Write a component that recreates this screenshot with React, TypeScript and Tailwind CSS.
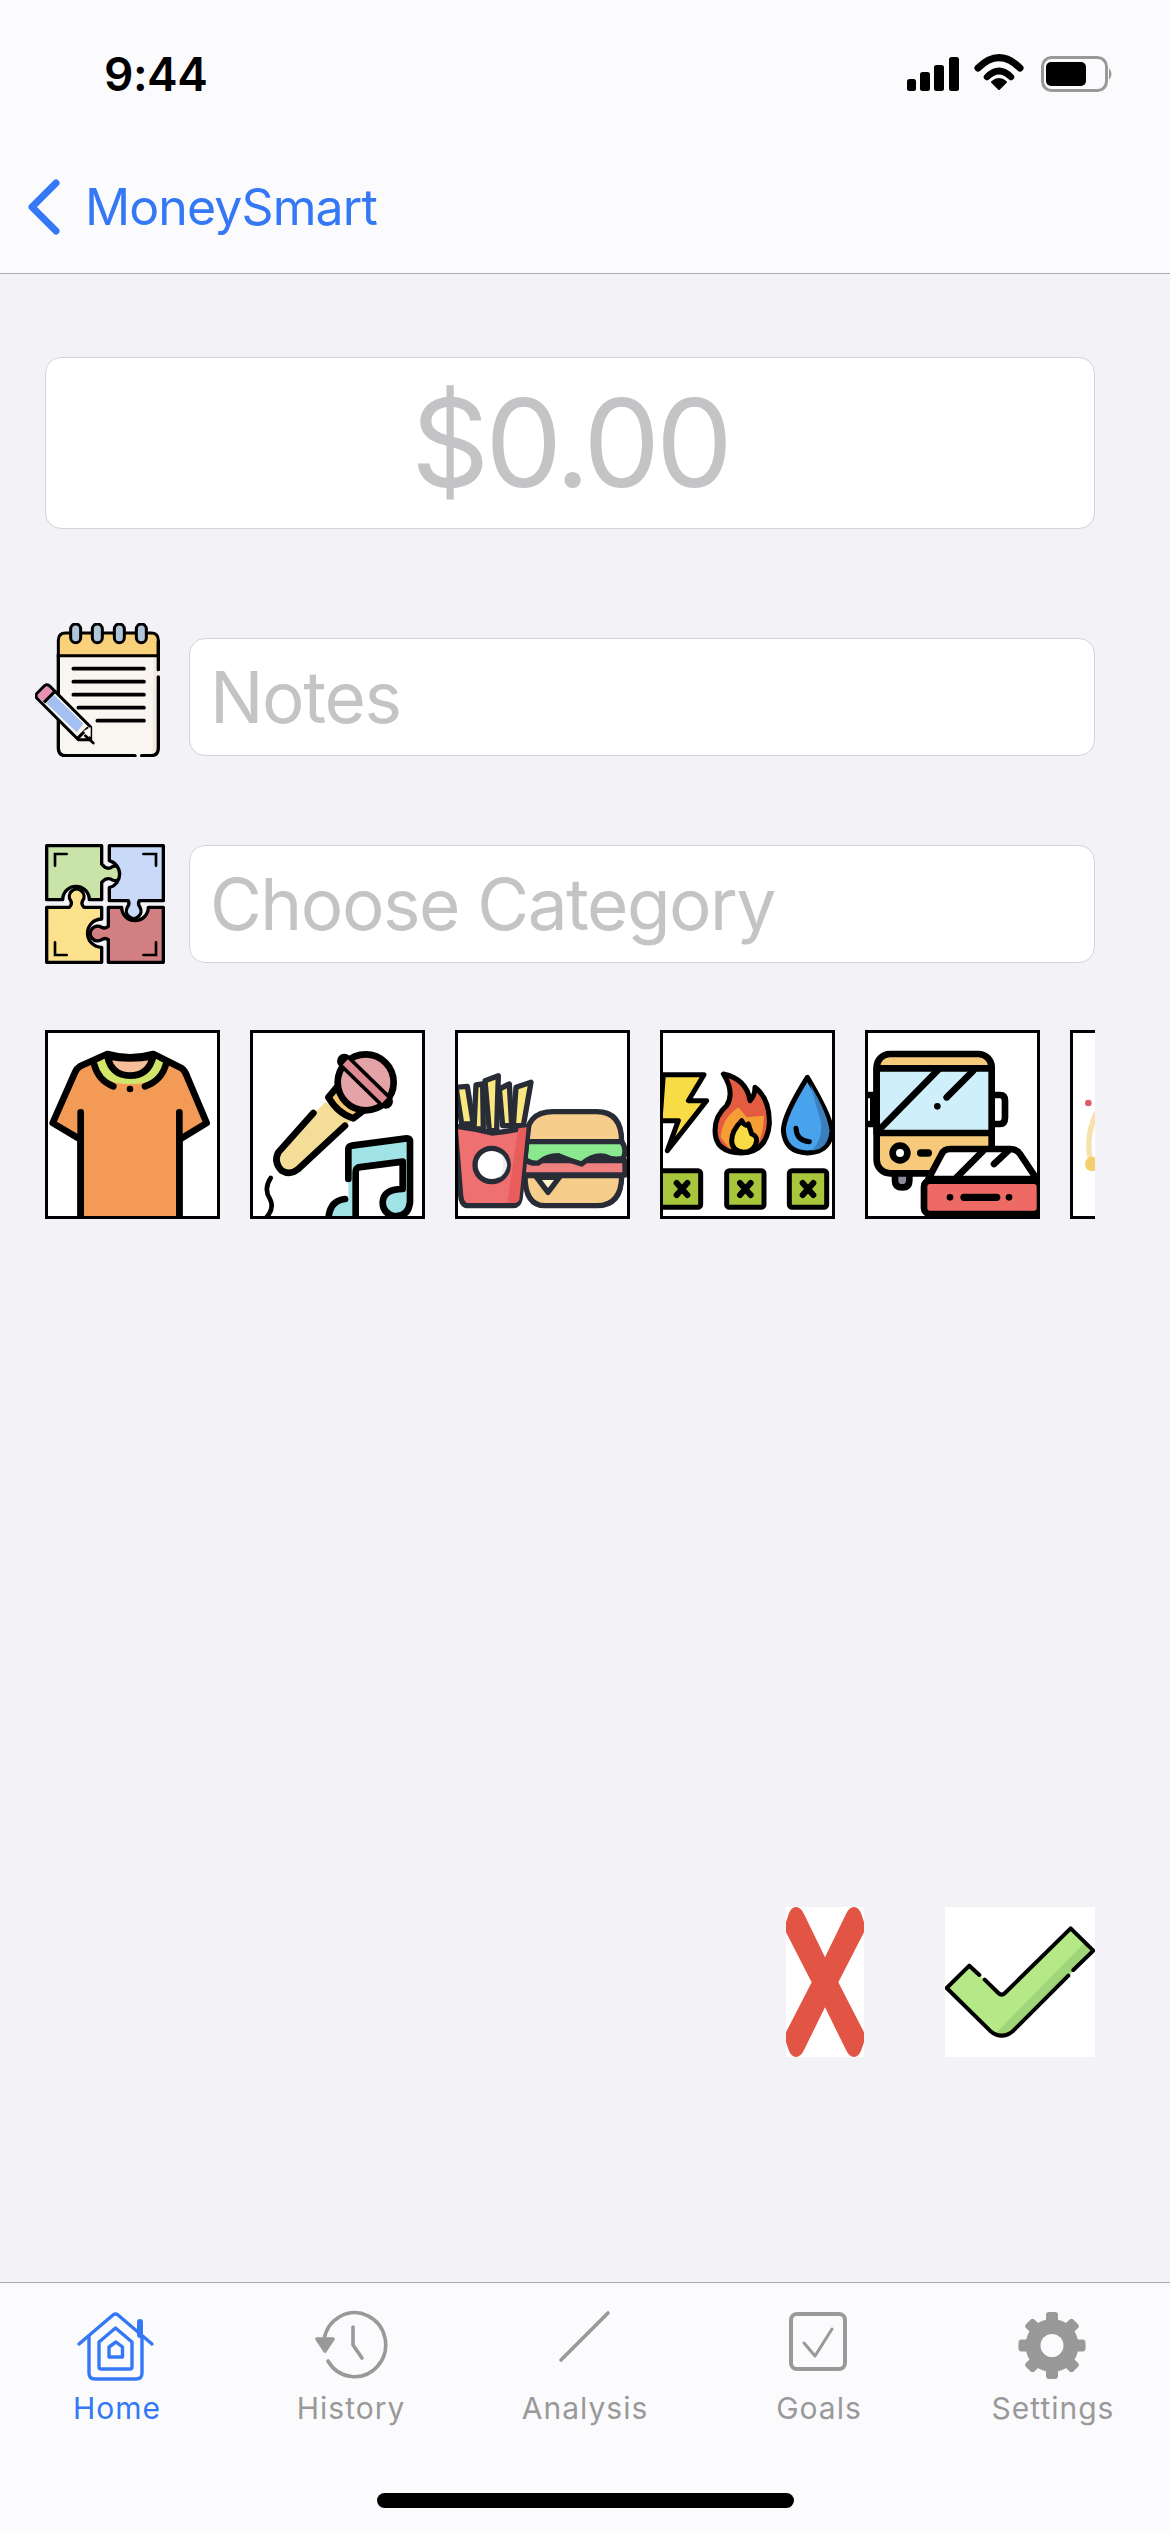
import React from "react";

const BLUE = "#3478f6";
const GRAY = "#999999";

function StatusIcons() {
  return (
    <svg width="216" height="44" viewBox="0 0 216 44" className="shrink-0">
      {/* signal */}
      <rect x="7" y="27" width="9" height="12" rx="2.5" fill="#000" />
      <rect x="20" y="20" width="10" height="19" rx="2.5" fill="#000" />
      <rect x="34" y="13" width="10" height="26" rx="2.5" fill="#000" />
      <rect x="49" y="5" width="10" height="34" rx="2.5" fill="#000" />
      {/* wifi */}
      <path d="M78 16 Q99 -5 120 16" fill="none" stroke="#000" strokeWidth="7" strokeLinecap="round" />
      <path d="M87 25 Q99 13 111 25" fill="none" stroke="#000" strokeWidth="6.5" strokeLinecap="round" />
      <path d="M99 37 L92 30 Q99 24 106 30 Z" fill="#000" stroke="#000" strokeWidth="2" strokeLinejoin="round" />
      {/* battery */}
      <rect x="142.5" y="5.5" width="64" height="33" rx="9" fill="none" stroke={GRAY} strokeWidth="3" />
      <rect x="146" y="10" width="40" height="24" rx="5" fill="#000" />
      <path d="M209 16 Q214 22 209 28 Z" fill={GRAY} />
    </svg>
  );
}

function NotesIcon() {
  return (
    <svg width="125" height="134" viewBox="45 70 375 402" className="shrink-0 -ml-[10px] -mb-px">
      <path d="M115 165 H415 V445 Q415 466 392 466 H138 Q115 466 115 445 Z" fill="#f9f5f1" />
      <path d="M400 165 H415 V445 Q415 466 398 466 Z" fill="#f5e9df" />
      <path d="M115 168 V122 Q115 100 137 100 H393 Q415 100 415 122 V168 Z" fill="#f9d17a" stroke="#000" strokeWidth="9" />
      <path d="M415 210 V125 M415 232 V445 Q415 468 392 468 H365 M345 468 H138 Q115 468 115 445 V165" fill="none" stroke="#000" strokeWidth="10" strokeLinecap="round" />
      {[167, 232, 298, 364].map((x) => (
        <rect key={x} x={x - 15} y="73" width="30" height="56" rx="15" fill="#aec6d8" stroke="#000" strokeWidth="9" />
      ))}
      <path d="M160 207 H372 M160 246 H372 M160 285 H372 M175 324 H372 M232 363 H372" stroke="#000" strokeWidth="11" strokeLinecap="round" />
      <path d="M48 288 L82 256 L212 384 L212 420 L175 420 Z" fill="#f9f5f1" />
      <path d="M78 310 L102 286 L190 372 L170 398 Z" fill="#a4c0f3" />
      <path d="M50 288 L82 258 L102 280 L72 308 Z" fill="#ea8fb4" />
      <path d="M48 288 Q48 284 52 280 L74 258 Q82 252 90 260 L212 382 L212 420 L175 420 L50 295 Z M72 308 L102 278 M175 414 L205 384" fill="none" stroke="#000" strokeWidth="9" strokeLinejoin="round" />
      <path d="M190 395 L212 382 L212 412 Z" fill="#fff" />
      <path d="M196 408 L220 430" stroke="#000" strokeWidth="8" strokeLinecap="round" />
    </svg>
  );
}

function PuzzleIcon() {
  return (
    <svg width="120" height="120" viewBox="75 735 360 360" className="shrink-0">
      <g stroke="#000" strokeWidth="10" strokeLinejoin="round">
        <path d="M80 740 H245 V795 Q258 812 272 806 A22 22 0 1 1 272 840 Q258 835 245 850 V902 H208 A40 40 0 0 0 128 902 H80 Z" fill="#c9e3a9" />
        <path d="M268 740 H430 V905 H358 Q352 915 360 925 A22 22 0 1 1 322 925 Q330 915 325 905 H268 V866 A42 42 0 0 0 268 785 Z" fill="#c9daf8" />
        <path d="M80 925 H148 Q158 915 152 905 A22 22 0 1 1 188 905 Q182 915 192 925 H245 V960 A42 42 0 0 0 245 1045 V1090 H80 Z" fill="#fce28c" />
        <path d="M265 925 H305 A40 40 0 0 0 385 925 H430 V1090 H265 V1022 Q255 1015 245 1022 A22 22 0 1 1 245 985 Q255 990 265 982 Z" fill="#d27f82" />
      </g>
      <g fill="none" stroke="#000" strokeWidth="8" strokeLinecap="round">
        <path d="M140 765 H105 V800" />
        <path d="M370 765 H408 V800" />
        <path d="M105 1030 V1068 H140" />
        <path d="M370 1068 H408 V1030" />
      </g>
    </svg>
  );
}

function ShirtArt() {
  return (
    <svg viewBox="54 72 507 549" className="block w-full h-full">
      <path d="M232 135 Q300 155 370 135 L455 178 Q465 185 470 200 L530 342 L448 392 V640 H152 V392 L68 342 L135 190 Q140 178 150 172 Z" fill="#f29a56" stroke="#000" strokeWidth="20" strokeLinejoin="round" />
      <path d="M195 165 Q215 228 300 225 Q385 228 405 165 L370 145 Q300 160 232 145 Z" fill="#d0e56a" />
      <path d="M232 142 Q300 155 370 142 Q355 200 300 200 Q245 200 232 142 Z" fill="#f6bf9a" stroke="#000" strokeWidth="20" strokeLinejoin="round" />
      <path d="M192 165 Q205 215 250 232 M345 232 Q395 215 408 165 M152 310 V640 M448 310 V640" fill="none" stroke="#000" strokeWidth="20" strokeLinecap="round" />
      <circle cx="300" cy="240" r="10" fill="#000" />
    </svg>
  );
}

function MicArt() {
  return (
    <svg viewBox="669 72 507 549" className="block w-full h-full">
      <path d="M885 280 L745 430 Q730 460 755 485 Q780 500 805 480 L975 325 Z" fill="#f3dd97" />
      <path d="M850 312 L745 430 Q730 460 755 485 Q780 500 805 480 L945 350" fill="none" stroke="#000" strokeWidth="20" strokeLinecap="round" />
      <path d="M895 265 L920 235 L1000 305 L970 328 Q925 315 895 265 Z" fill="#f3ca6e" stroke="#000" strokeWidth="20" strokeLinejoin="round" />
      <circle cx="1007" cy="220" r="84" fill="#e3a3a7" stroke="#000" strokeWidth="20" />
      <path d="M943 156 L1067 277" stroke="#000" strokeWidth="44" strokeLinecap="round" />
      <path d="M946 159 L1064 274" stroke="#df8a92" strokeWidth="22" />
      <path d="M722 507 Q700 540 720 570 Q735 600 705 630" fill="none" stroke="#000" strokeWidth="14" strokeLinecap="round" />
      <path d="M955 510 V415 L1140 388 V590 Q1135 625 1095 622 Q1058 615 1058 580 Q1060 540 1118 540 V458 L980 478 V640 H895 Q895 575 945 570 L955 570 Z" fill="#a0e3e6" />
      <path d="M1118 470 V540 L1000 560 V640 H975 V478 Z" fill="#fff" />
      <path d="M955 510 V420 Q955 412 965 410 L1130 388 Q1140 388 1140 398 V580 Q1135 622 1095 622 Q1058 615 1058 580 Q1060 540 1118 540 V458 L985 475 Q977 478 977 490 V640 M945 570 Q895 575 895 640" fill="none" stroke="#000" strokeWidth="20" strokeLinecap="round" strokeLinejoin="round" />
    </svg>
  );
}

function FoodArt() {
  return (
    <svg viewBox="84 72 507 549" className="block w-full h-full">
      <g stroke="#282c36" strokeWidth="16" strokeLinejoin="round">
        <path d="M290 398 Q285 308 370 308 H500 Q575 308 575 398 Z" fill="#f6cd8b" />
        <path d="M285 500 H575 Q575 590 500 590 H345 Q285 590 285 500 Z" fill="#f6cd8b" />
        <path d="M320 505 H388 L354 550 Z" fill="#fdf4c8" />
        <path d="M280 455 H585 V498 H280 Z" fill="#ef8080" />
        <path d="M290 398 H575 Q592 420 580 448 Q550 455 525 442 Q490 435 455 465 Q420 455 385 440 Q350 440 325 462 Q300 465 285 450 Z" fill="#8ae98f" />
        <path d="M78 235 L112 232 L130 345 H95 Z" fill="#fae77f" />
        <path d="M138 228 L158 225 L160 360 H132 Z" fill="#fae77f" />
        <path d="M165 215 L205 200 L200 365 H178 Z" fill="#fae77f" />
        <path d="M208 240 L238 225 L245 350 H218 Z" fill="#fae77f" />
        <path d="M258 235 L303 220 L280 350 H250 Z" fill="#fae77f" />
        <path d="M75 352 Q130 358 185 372 Q240 368 296 352 L270 570 Q265 590 248 590 L115 590 Q95 590 92 560 Z" fill="#ef7070" />
      </g>
      <path d="M265 358 L290 355 L268 572 Q264 582 250 582 L232 582 Z" fill="#e85c5c" />
      <circle cx="185" cy="468" r="50" fill="#fff" stroke="#282c36" strokeWidth="16" />
      <path d="M205 430 Q235 468 205 508 Q228 495 232 468 Q228 442 205 430 Z" fill="#ececec" />
    </svg>
  );
}

function UtilitiesArt() {
  return (
    <svg viewBox="699 72 507 549" className="block w-full h-full">
      <g stroke="#000" strokeWidth="15" strokeLinejoin="round">
        <path d="M700 197 H822 L775 275 H830 L712 425 L745 335 H690 Z" fill="#f9dc45" />
        <path d="M880 195 Q950 210 960 275 Q975 260 975 235 Q1020 270 1018 345 Q1010 430 935 432 Q855 430 855 365 Q855 320 890 290 Q915 250 880 195 Z" fill="#e35b40" />
        <path d="M1132 205 Q1060 320 1060 365 Q1065 430 1132 432 Q1200 430 1206 365 Q1200 320 1132 205 Z" fill="#49a2ec" />
      </g>
      <path d="M1140 225 Q1195 320 1198 365 Q1195 420 1145 425 Q1180 390 1172 335 Z" fill="#3b7fbd" />
      <path d="M872 385 Q875 330 925 295 L950 325 L1002 320 Q1000 380 980 412 L900 420 Z" fill="#f59e33" />
      <path d="M905 395 Q905 365 935 335 Q945 355 955 345 L965 375 Q980 380 980 395 Q975 430 940 430 Q905 425 905 395 Z" fill="#f9dc45" stroke="#000" strokeWidth="15" strokeLinejoin="round" />
      <path d="M1098 358 Q1100 395 1138 398" fill="none" stroke="#000" strokeWidth="15" strokeLinecap="round" />
      {[690, 890, 1078].map((x) => (
        <g key={x}>
          <rect x={x} y="485" width={x === 690 ? 122 : 112} height="110" rx="8" fill="#a8c63c" stroke="#000" strokeWidth="15" />
          <path d={`M${x + (x === 690 ? 50 : 40)} 522 l32 36 m0 -36 l-32 36`} stroke="#000" strokeWidth="18" strokeLinecap="round" />
        </g>
      ))}
    </svg>
  );
}

function TransportArt() {
  return (
    <svg viewBox="84 72 507 549" className="block w-full h-full">
      <g stroke="#000" strokeWidth="20" strokeLinejoin="round" strokeLinecap="round">
        <path d="M75 258 H100 V345 H75" fill="#fff" />
        <path d="M465 258 H480 Q495 258 495 275 V325 Q495 345 480 345 H465" fill="#fff" />
        <path d="M165 495 V515 Q165 535 187 535 Q208 535 208 515 V495" fill="#8a8a99" />
        <rect x="110" y="135" width="345" height="358" rx="40" fill="#f6ca7a" />
        <rect x="110" y="178" width="345" height="194" fill="#cff0fb" />
        <path d="M295 182 L120 360 M400 185 L320 265" fill="none" />
        <circle cx="180" cy="432" r="22" fill="#fff" />
        <path d="M242 432 H265" strokeWidth="22" />
        <path d="M265 510 L305 435 Q312 420 330 420 H510 Q530 420 540 435 L590 510 Z" fill="#fff" />
        <rect x="252" y="515" width="348" height="100" rx="18" fill="#ee6a64" />
        <path d="M350 505 L430 425 M462 465 L505 425" fill="none" />
        <path d="M372 565 H470" strokeWidth="22" />
      </g>
      <circle cx="292" cy="292" r="10" fill="#000" />
      <circle cx="330" cy="565" r="10" fill="#000" />
      <circle cx="507" cy="565" r="10" fill="#000" />
    </svg>
  );
}

function BellArt() {
  return (
    <svg viewBox="699 72 507 549" className="block w-full h-full">
      <circle cx="745" cy="282" r="10" fill="#df5a6a" />
      <path d="M770 310 Q735 380 752 455" fill="none" stroke="#f7e2ad" strokeWidth="16" />
      <circle cx="757" cy="465" r="22" fill="#f5cf6b" />
    </svg>
  );
}

const tiles = [ShirtArt, MicArt, FoodArt, UtilitiesArt, TransportArt, BellArt];

function CancelIcon() {
  return (
    <svg viewBox="78 54 234 450" className="block w-[78px] h-[150px] bg-white">
      <path
        d="M195 205 L258 75 Q268 54 282 54 Q296 54 304 75 L312 100 V130 L235 280 L312 430 V460 L304 483 Q296 504 282 504 Q268 504 258 483 L195 355 L132 483 Q122 504 108 504 Q94 504 86 483 L78 460 V430 L155 280 L78 130 V100 L86 75 Q94 54 108 54 Q122 54 132 75 Z"
        fill="#e25544"
      />
    </svg>
  );
}

function ConfirmIcon() {
  return (
    <svg viewBox="555 54 450 450" className="block w-[150px] h-[150px] bg-white">
      <path d="M560 297 L628 230 L725 322 L932 118 L1000 185 L760 425 Q725 455 690 425 Z" fill="#b5e987" />
      <path d="M975 160 L1000 185 L760 425 Q735 445 705 435 Z" fill="#a0d57a" />
      <path d="M658 258 L628 230 L560 297 L690 425 Q725 455 760 425 L925 260 M940 243 L1000 185 L932 118 L735 312 Q725 322 715 312 L674 272" fill="none" stroke="#000" strokeWidth="12" strokeLinecap="round" strokeLinejoin="round" />
    </svg>
  );
}

function HomeTabIcon() {
  return (
    <svg width="90" height="72" viewBox="0 0 90 72" fill="none" stroke={BLUE} strokeWidth="3.4" strokeLinecap="round" strokeLinejoin="round">
      <path d="M7 34 L41 5 Q43.5 3 46 5 L80 34" />
      <path d="M17 27 V63 Q17 69 23 69 H64 Q70 69 70 63 V27" />
      <path d="M68 12 V25" strokeWidth="6" />
      <path d="M27 32 L43.5 18 L60 32 V57 Q60 59 58 59 H29 Q27 59 27 57 Z" />
      <path d="M37 37 L44 32 L50.5 37 V47 H37 Z" />
    </svg>
  );
}

function HistoryTabIcon() {
  return (
    <svg width="90" height="72" viewBox="0 0 90 72" fill="none" stroke={GRAY} strokeWidth="3.6" strokeLinecap="round" strokeLinejoin="round">
      <path d="M22 51 A31 32 0 1 0 18 30" />
      <path d="M11 29 H27 L19 41 Z" fill={GRAY} />
      <path d="M47 17 V35 L56 48" />
    </svg>
  );
}

function AnalysisTabIcon() {
  return (
    <svg width="90" height="72" viewBox="0 0 90 72" fill="none" stroke={GRAY} strokeWidth="3.6" strokeLinecap="round">
      <path d="M21 50 L68 3" />
    </svg>
  );
}

function GoalsTabIcon() {
  return (
    <svg width="90" height="72" viewBox="0 0 90 72" fill="none" stroke={GRAY} strokeLinecap="round" strokeLinejoin="round">
      <rect x="17" y="4" width="54" height="55" rx="6" strokeWidth="4" />
      <path d="M30 33 L41 46 L58 19" strokeWidth="3" />
    </svg>
  );
}

function SettingsTabIcon() {
  return (
    <svg width="90" height="72" viewBox="0 0 90 72">
      <circle cx="44" cy="35.5" r="19" fill="none" stroke={GRAY} strokeWidth="15" />
      {[0, 45, 90, 135, 180, 225, 270, 315].map((a) => (
        <rect key={a} x="38" y="2" width="12" height="14" rx="3" fill={GRAY} transform={`rotate(${a} 44 35.5)`} />
      ))}
    </svg>
  );
}

const tabs = [
  { label: "Home", icon: HomeTabIcon, active: true },
  { label: "History", icon: HistoryTabIcon, active: false },
  { label: "Analysis", icon: AnalysisTabIcon, active: false },
  { label: "Goals", icon: GoalsTabIcon, active: false },
  { label: "Settings", icon: SettingsTabIcon, active: false },
];

export default function App() {
  return (
    <div className="w-[1170px] h-[2532px] flex flex-col bg-[#f2f2f7] font-['Inter',sans-serif] overflow-hidden">
      {/* header */}
      <header className="h-[274px] shrink-0 flex flex-col bg-[#fbfbfd] border-b border-[#aaaaad]">
        <div className="h-[148px] flex items-center justify-between pl-[104px] pr-[54px]">
          <span className="text-[46px] font-semibold text-black leading-none tracking-[-0.5px]">9:44</span>
          <StatusIcons />
        </div>
        <div className="flex items-center gap-[25px] pl-[27px] h-[118px]">
          <svg width="33" height="56" viewBox="0 0 33 56" fill="none" stroke={BLUE} strokeWidth="7" strokeLinecap="round" strokeLinejoin="round">
            <path d="M29 4 L5 28 L29 52" />
          </svg>
          <span className="text-[50px] leading-none tracking-[-0.9px] text-[#3478f6]">MoneySmart</span>
        </div>
      </header>

      {/* form */}
      <main className="flex-1 flex flex-col pl-[45px] pr-[75px] pt-[83px]">
        <div className="h-[172px] bg-white border border-[#d4d4d7] rounded-[16px] flex items-center justify-center text-[122px] leading-none tracking-[-4px] text-[#c4c4c6]">
          $0.00
        </div>

        <div className="mt-[94px] flex items-end gap-[29px]">
          <NotesIcon />
          <div className="flex-1 h-[118px] bg-white border border-[#d4d4d7] rounded-[16px] flex items-center px-[20px] text-[71px] leading-none tracking-[-1.4px] text-[#c4c4c6]">
            Notes
          </div>
        </div>

        <div className="mt-[88px] flex items-center gap-[24px]">
          <PuzzleIcon />
          <div className="flex-1 h-[118px] bg-white border border-[#d4d4d7] rounded-[16px] flex items-center px-[20px] text-[71px] leading-none tracking-[-1.5px] text-[#c4c4c6]">
            Choose Category
          </div>
        </div>

        <div className="mt-[66px] flex gap-[30px] overflow-hidden">
          {tiles.map((Art, i) => (
            <div key={i} className="w-[175px] h-[189px] shrink-0 bg-white border-[3px] border-black overflow-hidden">
              <Art />
            </div>
          ))}
        </div>

        <div className="mt-[688px] flex justify-end gap-[81px]">
          <CancelIcon />
          <ConfirmIcon />
        </div>
      </main>

      {/* tab bar */}
      <footer className="h-[250px] shrink-0 flex flex-col bg-[#fbfbfd] border-t border-[#aaaaad]">
        <nav className="grid grid-cols-5 pt-[27px]">
          {tabs.map((t) => {
            const Icon = t.icon;
            return (
              <div key={t.label} className="flex flex-col items-center">
                <Icon />
                <span className={`mt-[8px] text-[30px] leading-[36px] tracking-[1px] ${t.active ? "text-[#3478f6]" : "text-[#999999]"}`}>
                  {t.label}
                </span>
              </div>
            );
          })}
        </nav>
        <div className="mt-auto mb-[24px] mx-auto w-[417px] h-[15px] rounded-full bg-black" />
      </footer>
    </div>
  );
}
